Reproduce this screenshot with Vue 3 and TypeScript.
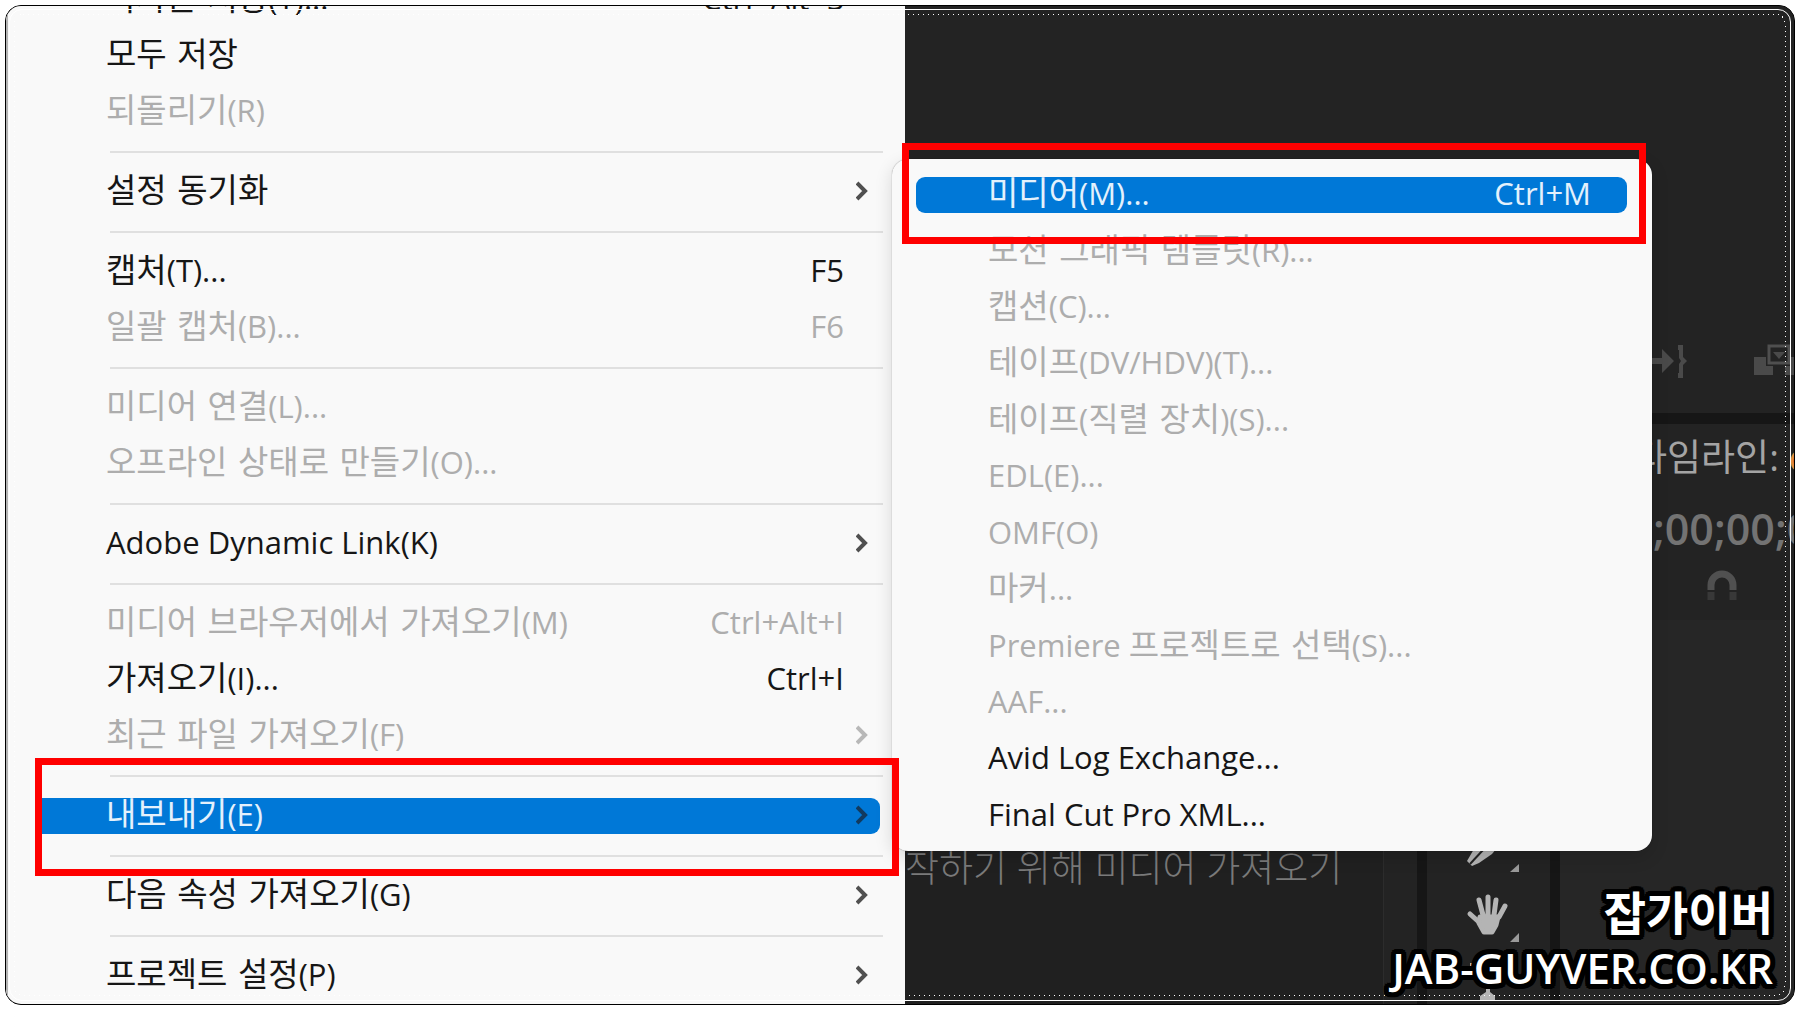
<script setup lang="ts">
interface Entry {
  label?: string
  keys?: string
  more?: boolean
  off?: boolean
  active?: boolean
  line?: boolean
}

const fileMenu: Entry[] = [
  { label: '복사본 저장(Y)...', keys: 'Ctrl+Alt+S' },
  { label: '모두 저장' },
  { label: '되돌리기(R)', off: true },
  { line: true },
  { label: '설정 동기화', more: true },
  { line: true },
  { label: '캡처(T)...', keys: 'F5' },
  { label: '일괄 캡처(B)...', keys: 'F6', off: true },
  { line: true },
  { label: '미디어 연결(L)...', off: true },
  { label: '오프라인 상태로 만들기(O)...', off: true },
  { line: true },
  { label: 'Adobe Dynamic Link(K)', more: true },
  { line: true },
  { label: '미디어 브라우저에서 가져오기(M)', keys: 'Ctrl+Alt+I', off: true },
  { label: '가져오기(I)...', keys: 'Ctrl+I' },
  { label: '최근 파일 가져오기(F)', more: true, off: true },
  { line: true },
  { label: '내보내기(E)', more: true, active: true },
  { line: true },
  { label: '다음 속성 가져오기(G)', more: true },
  { line: true },
  { label: '프로젝트 설정(P)', more: true },
]

const exportMenu: Entry[] = [
  { label: '미디어(M)...', keys: 'Ctrl+M', active: true },
  { label: '모션 그래픽 템플릿(R)...', off: true },
  { label: '캡션(C)...', off: true },
  { label: '테이프(DV/HDV)(T)...', off: true },
  { label: '테이프(직렬 장치)(S)...', off: true },
  { label: 'EDL(E)...', off: true },
  { label: 'OMF(O)', off: true },
  { label: '마커...', off: true },
  { label: 'Premiere 프로젝트로 선택(S)...', off: true },
  { label: 'AAF...', off: true },
  { label: 'Avid Log Exchange...' },
  { label: 'Final Cut Pro XML...' },
]

// Hangul is set slightly larger than Latin, so a label is cut into runs of each script
const runs = (text: string) =>
  (text.match(/[가-힣]+(?: +[가-힣]+)*|[^가-힣]+/g) ?? []).map((t) => ({ t, ko: /[가-힣]/.test(t) }))
</script>

<template>
  <main class="frame">
    <nav class="menu" aria-label="파일">
      <ul>
        <li v-for="(e, i) in fileMenu" :key="i" :class="e.line ? 'line' : 'row'">
          <button v-if="e.label" type="button" class="item" :class="{ active: e.active, open: e.active }" :disabled="e.off">
            <span class="label"><span v-for="(r, k) in runs(e.label)" :key="k" :class="{ ko: r.ko }">{{ r.t }}</span></span>
            <span v-if="e.keys" class="keys">{{ e.keys }}</span>
            <span class="slot">
              <svg v-if="e.more" width="12" height="20" viewBox="0 0 12 20" aria-hidden="true">
                <path d="M1 2 9 10 1 18" />
              </svg>
            </span>
          </button>
          <span v-if="e.active" class="mark"></span>
        </li>
      </ul>
    </nav>

    <section class="app">
      <div class="monitor">
        <svg class="to-out" width="38" height="36" viewBox="0 0 38 36" aria-hidden="true">
          <path d="M0 14h12V5l12 12-12 12V20H0z" />
          <path d="M28 1h5v12l4 4-4 4v13h-5v-5h1v-9l2-3-2-3V6h-1z" />
        </svg>
        <svg class="overwrite" width="48" height="32" viewBox="0 0 48 32" aria-hidden="true">
          <path d="M0 13h12v9h7v9H0zM37 13h11v18H31v-9h6z" />
          <path d="M15 13V2h20v17H15z" fill="none" stroke="#4f4f4f" stroke-width="3" />
          <path d="M19 8h12l-6 7z" />
        </svg>
      </div>
      <div class="bottom">
        <div class="project">
          <p class="hint">시작하기 위해 미디어 가져오기</p>
        </div>
        <div class="tools">
          <svg width="54" height="152" viewBox="0 0 54 152" aria-hidden="true">
            <path d="M1 12 8 0h22L26 5 13 14 6 17z" fill="#b4b4b4" />
            <path d="M4 15 17 1" stroke="#232323" stroke-width="2" />
            <path d="M53 15v8h-9zM53 84v9h-9z" fill="#9a9a9a" />
            <g stroke="#b4b4b4" stroke-width="5" stroke-linecap="round" stroke-linejoin="round" fill="#b4b4b4">
              <path d="M17 66 13 51M22 66V48M28 66l2-15M33 68l6-11" />
              <path d="M14 74 4 65" />
              <path d="M14 68h18l-2 8-4 7h-8l-5-9z" />
            </g>
            <path d="M4 114h34v4H4zM20 118h4v25l5 4v4H14v-4l6-4z" fill="#b4b4b4" />
          </svg>
        </div>
        <div class="timeline">
          <div class="head">
            <p class="name">타임라인: <b>c</b></p>
            <p class="time">;00;00;00</p>
            <svg width="30" height="30" viewBox="0 0 30 30" aria-hidden="true">
              <path d="M4 20v-5a11 11 0 0 1 22 0v5" fill="none" stroke="#505050" stroke-width="7" />
              <path d="M4 22v8M26 22v8" stroke="#383838" stroke-width="7" />
            </svg>
          </div>
        </div>
      </div>
    </section>

    <nav class="submenu" aria-label="내보내기">
      <ul>
        <li v-for="(e, i) in exportMenu" :key="i" class="row">
          <button type="button" class="item" :class="{ active: e.active }" :disabled="e.off">
            <span class="label"><span v-for="(r, k) in runs(e.label ?? '')" :key="k" :class="{ ko: r.ko }">{{ r.t }}</span></span>
            <span v-if="e.keys" class="keys">{{ e.keys }}</span>
            <span class="slot"></span>
          </button>
          <span v-if="e.active" class="mark"></span>
        </li>
      </ul>
    </nav>

    <div class="trim"></div>
    <svg class="dots" aria-hidden="true">
      <rect />
    </svg>

    <footer class="credit">
      <span class="who">잡가이버</span>
      <span class="site">JAB-GUYVER.CO.KR</span>
    </footer>
  </main>
</template>

<style>
body {
  background: #fff;
}
</style>

<style scoped>
.frame {
  position: relative;
  display: flex;
  box-sizing: border-box;
  height: calc(100vh - 10px);
  margin: 5px;
  overflow: hidden;
  border: 1px solid #000;
  border-radius: 16px;
  background: #232323;
  font-family: "Open Sans", "Noto Sans CJK KR", sans-serif;
}

ul {
  margin: 0;
  padding: 0;
  list-style: none;
}

p {
  margin: 0;
}

.menu {
  display: flex;
  flex: 0 0 899px;
  flex-direction: column;
  justify-content: flex-end;
  box-sizing: border-box;
  overflow: hidden;
  border-left: 2px solid #b5b5b5;
  background: #f9f9f9;
}

.row {
  position: relative;
  display: flex;
  align-items: center;
  height: 56px;
  padding: 0 25px 0 28px;
}

.line {
  height: 2px;
  margin: 11px 22px 11px 102px;
  background: #e0e0e0;
}

.item {
  display: flex;
  flex: 1;
  height: 36px;
  padding: 0 0 0 70px;
  border: 0;
  border-radius: 9px;
  background: none;
  color: #161616;
  font: 31px/32px "Open Sans", "Noto Sans CJK KR", sans-serif;
  text-align: left;
  white-space: pre;
}

.item:disabled {
  color: #adadad;
}

.item.active {
  background: #0078d7;
  color: #e4f1fc;
}

.item.open {
  border-radius: 0 9px 9px 0;
}

.label {
  flex: 1;
}

.ko {
  font-family: "DejaVu Sans", "Noto Sans CJK KR", sans-serif;
  font-size: 33px;
}

.slot {
  display: flex;
  align-items: center;
  justify-content: center;
  width: 36px;
  height: 34px;
}

.slot path {
  fill: none;
  stroke: #505050;
  stroke-width: 4;
}

.item:disabled .slot path {
  stroke: #b8b8b8;
}

.item.active .slot path {
  stroke: #123a5e;
}

.mark {
  position: absolute;
  z-index: 5;
  inset: -30px 6px -32px 27px;
  border: 7px solid #f00;
}

.submenu {
  position: absolute;
  z-index: 2;
  top: 153px;
  left: 886px;
  box-sizing: border-box;
  width: 760px;
  height: 692px;
  padding: 8px 0 7px;
  border-radius: 16px;
  background: #f9f9f9;
  box-shadow: 0 0 1px rgba(0, 0, 0, 0.5), 0 6px 18px rgba(0, 0, 0, 0.14);
}

.submenu ul {
  display: grid;
  grid-template-rows: repeat(12, 1fr);
  height: 100%;
}

.submenu .row {
  height: auto;
  padding: 0 25px 0 24px;
}

.submenu .item {
  padding-left: 72px;
}

/* The submenu is its own layer, so its mark stays above the rows it crosses */
.submenu .mark {
  inset: -24px 6px -21px 10px;
}

.app {
  display: flex;
  flex: 1;
  flex-direction: column;
  gap: 11px;
  min-width: 0;
  overflow: hidden;
  background: #161616;
}

.monitor {
  display: flex;
  flex: none;
  justify-content: flex-end;
  gap: 66px;
  box-sizing: border-box;
  height: 407px;
  padding-top: 338px;
  overflow: hidden;
  background: #232323;
  fill: #4a4a4a;
}

.monitor svg {
  flex: none;
}

.overwrite {
  margin-right: -8px;
}

.bottom {
  display: flex;
  flex: 1;
  gap: 10px;
  min-height: 0;
}

.project {
  flex: 1;
  margin-right: 33px;
  border-right: 1px solid #2c2c2c;
  background: #202020;
  box-shadow: 33px 0 #232323;
}

.hint {
  margin: 420px 0 0 -34px;
  color: #7a7a7a;
  font: 300 37px/48px "Open Sans", "Noto Sans CJK KR", sans-serif;
  white-space: nowrap;
}

.tools {
  box-sizing: border-box;
  width: 123px;
  padding: 425px 0 0 39px;
  overflow: hidden;
  background: #232323;
}

.timeline {
  width: 234px;
  overflow: hidden;
  background: #262626;
}

.head {
  box-sizing: border-box;
  height: 196px;
  padding: 9px 0 0 73px;
  background: #232323;
  white-space: nowrap;
}

.name {
  color: #a4a4a4;
  font: 37px/48px "Open Sans", "Noto Sans CJK KR", sans-serif;
}

.name b {
  color: #e08a3c;
  font-weight: 400;
}

.time {
  margin: 20px 0 0 20px;
  color: #737373;
  font-size: 43px;
  font-weight: 600;
  line-height: 56px;
}

.head svg {
  display: block;
  margin: 13px 0 0 74px;
}

.trim {
  position: absolute;
  z-index: 6;
  inset: 3px;
  border: 1px solid #fff;
  border-radius: 13px;
  pointer-events: none;
}

.dots {
  position: absolute;
  z-index: 6;
  inset: 0;
  width: 100%;
  height: 100%;
  pointer-events: none;
}

.dots rect {
  x: 8px;
  y: 8px;
  width: calc(100% - 17px);
  height: calc(100% - 17px);
  rx: 9px;
  fill: none;
  stroke: #fff;
  stroke-dasharray: 1 4;
  shape-rendering: crispEdges;
}

.credit {
  position: absolute;
  z-index: 7;
  right: 21px;
  bottom: 8px;
  display: flex;
  flex-direction: column;
  align-items: flex-end;
  color: #fff;
  font-weight: 700;
  text-shadow: 5px 0 #000, 5px 2px #000, 4px 4px #000, 2px 5px #000, 0 5px #000, -2px 5px #000, -4px 4px #000,
    -5px 2px #000, -5px 0 #000, -5px -2px #000, -4px -4px #000, -2px -5px #000, 0 -5px #000, 2px -5px #000,
    4px -4px #000, 5px -2px #000, 2px 2px #000, -2px 2px #000, -2px -2px #000, 2px -2px #000;
}

.who {
  font-size: 46px;
  line-height: 56px;
}

.site {
  font-size: 42px;
  font-weight: 600;
  line-height: 56px;
}
</style>
